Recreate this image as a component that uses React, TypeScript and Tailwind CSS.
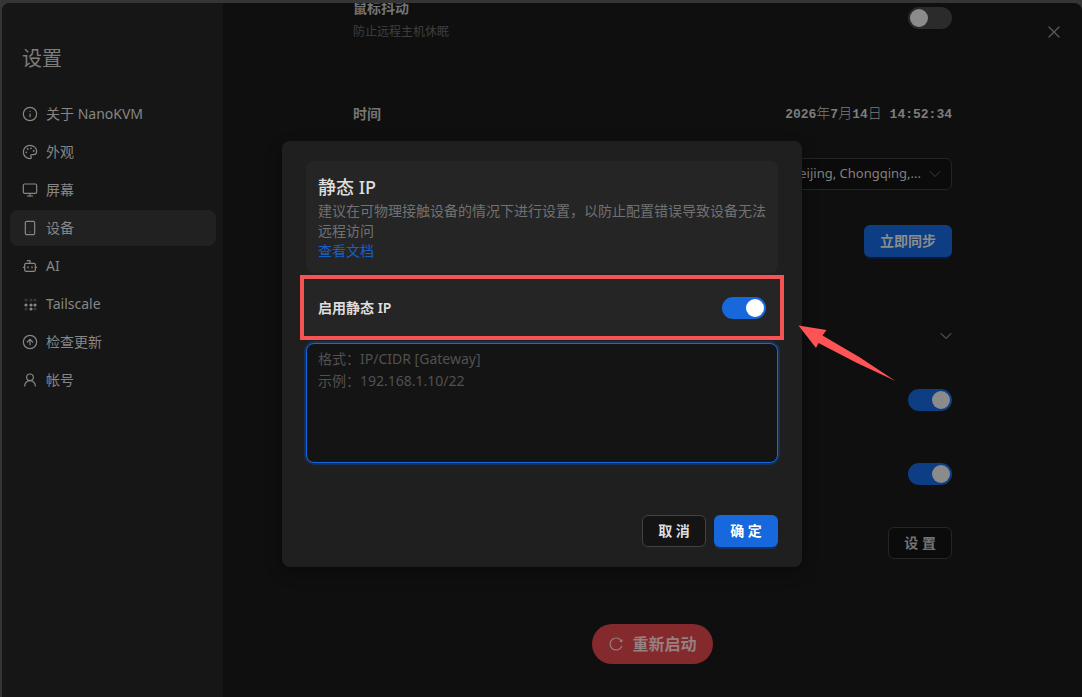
import React from "react";
import {
  Bot,
  ChevronDown,
  CircleArrowUp,
  Info,
  Monitor,
  Palette,
  Smartphone,
  UserRound,
  X,
} from "lucide-react";
import { AiOutlineReload } from "react-icons/ai";

function TailscaleIcon() {
  const dots: [number, number, boolean][] = [
    [4, 4, false],
    [9, 4, false],
    [13, 4, false],
    [4, 9, true],
    [9, 9, true],
    [13, 9, true],
    [4, 13, false],
    [9, 13, true],
    [13, 13, false],
  ];
  return (
    <svg viewBox="0 0 16 16" className="size-4" fill="currentColor" aria-hidden="true">
      {dots.map(([x, y, on]) => (
        <circle key={`${x}-${y}`} cx={x} cy={y} r="1.6" opacity={on ? 1 : 0.3} />
      ))}
    </svg>
  );
}

const navItems: { label: string; icon: React.ReactNode; active?: boolean }[] = [
  { label: "关于 NanoKVM", icon: <Info size={16} strokeWidth={1.8} /> },
  { label: "外观", icon: <Palette size={16} strokeWidth={1.8} /> },
  { label: "屏幕", icon: <Monitor size={16} strokeWidth={1.8} /> },
  { label: "设备", icon: <Smartphone size={16} strokeWidth={1.8} />, active: true },
  { label: "AI", icon: <Bot size={16} strokeWidth={1.8} /> },
  { label: "Tailscale", icon: <TailscaleIcon /> },
  { label: "检查更新", icon: <CircleArrowUp size={16} strokeWidth={1.8} /> },
  { label: "帐号", icon: <UserRound size={16} strokeWidth={1.8} /> },
];

function Toggle({
  label,
  id,
  defaultChecked = false,
  bright = false,
}: {
  label: string;
  id?: string;
  defaultChecked?: boolean;
  bright?: boolean;
}) {
  return (
    <input
      type="checkbox"
      role="switch"
      id={id}
      aria-label={label}
      defaultChecked={defaultChecked}
      className={
        "flex h-[22px] w-11 shrink-0 cursor-pointer appearance-none items-center rounded-full p-0.5 before:size-[18px] before:rounded-full before:content-[''] checked:justify-end " +
        (bright
          ? "bg-[#4a4a4a] before:bg-white checked:bg-[#1668dc]"
          : "bg-[#2b2b2b] before:bg-[#8b8b8b] checked:bg-[#0d3e84]")
      }
    />
  );
}

function Sidebar() {
  return (
    <aside className="w-[221px] shrink-0 bg-[#161616] pt-[38px] pr-[7px] pl-2">
      <h1 className="px-3 text-xl leading-9 text-[#7d7d7d]">设置</h1>
      <nav className="mt-[19px] flex flex-col gap-0.5">
        {navItems.map((item) => (
          <a
            key={item.label}
            href="#"
            aria-current={item.active ? "page" : undefined}
            className={
              "flex h-9 items-center gap-2 rounded-lg px-3 text-sm text-[#868686] " +
              (item.active ? "bg-[#212121]" : "")
            }
          >
            {item.icon}
            {item.label}
          </a>
        ))}
      </nav>
    </aside>
  );
}

function DeviceSettings() {
  return (
    <main className="min-w-0 flex-1 px-[130px]">
      <div className="flex items-start justify-between">
        <div className="-mt-[7px] flex flex-col">
          <span className="text-sm leading-6 font-semibold text-[#747474]">鼠标抖动</span>
          <span className="text-xs leading-6 text-[#3f3f3f]">防止远程主机休眠</span>
        </div>
        <div className="pt-1">
          <Toggle label="鼠标抖动" />
        </div>
      </div>

      <div className="mt-[58px] flex h-6 items-center justify-between text-[#7d7d7d]">
        <h2 className="text-sm font-semibold text-[#747474]">时间</h2>
        <time className="font-['Liberation_Mono','Noto_Sans_CJK_SC',monospace] text-[13px] font-bold whitespace-pre">
          2026<span className="text-sm font-light">年</span>7
          <span className="text-sm font-light">月</span>14
          <span className="text-sm font-light">日</span> 14:52:34
        </time>
      </div>

      <div className="mt-8 flex justify-end">
        <button
          type="button"
          className="flex h-8 w-60 items-center justify-end gap-1 rounded-md border border-[#252525] bg-[#0b0b0b] pr-1.5 text-[13px] whitespace-nowrap text-[#808080]"
        >
          (UTC+08:00) Beijing, Chongqing,...
          <ChevronDown size={20} strokeWidth={1} className="shrink-0 text-[#444444]" />
        </button>
      </div>

      <div className="mt-[35px] flex justify-end">
        <button
          type="button"
          className="h-8 rounded-md bg-[#0d3e84] px-4 text-sm font-semibold text-[#8c8c8c] shadow-[0_2px_0_#0b1a33]"
        >
          立即同步
        </button>
      </div>

      <div className="mt-[69px] -mr-1 flex justify-end">
        <button type="button" aria-label="展开" className="text-[#777777]">
          <ChevronDown size={20} strokeWidth={1.2} />
        </button>
      </div>

      <div className="mt-[43px] flex flex-col items-end gap-[52px]">
        <Toggle label="SSH" defaultChecked />
        <Toggle label="mDNS" defaultChecked />
      </div>

      <div className="mt-[42px] flex justify-end">
        <button
          type="button"
          className="h-8 rounded-md border border-[#262626] bg-[#0b0b0b] px-[15px] text-sm font-semibold text-[#747474]"
        >
          设 置
        </button>
      </div>

      <div className="mt-[65px] flex justify-center">
        <button
          type="button"
          className="flex h-10 items-center gap-2 rounded-full bg-[#84292c] px-4 text-base font-semibold text-[#968080]"
        >
          <AiOutlineReload size={16} />
          重新启动
        </button>
      </div>
    </main>
  );
}

function StaticIpDialog() {
  return (
    <div
      role="dialog"
      aria-modal="true"
      aria-labelledby="static-ip-title"
      className="w-[520px] rounded-lg bg-[#1f1f1f] px-6 py-5 shadow-[0_6px_16px_#00000055]"
    >
      <div className="rounded-lg bg-[#252525] p-3">
        <h2 id="static-ip-title" className="text-lg leading-7 font-medium text-[#dedede]">
          静态 IP
        </h2>
        <p className="text-sm leading-5 text-[#717171]">
          建议在可物理接触设备的情况下进行设置，以防止配置错误导致设备无法远程访问
        </p>
        <a href="#" className="block text-sm leading-5 text-[#1660c8]">
          查看文档
        </a>
      </div>

      <div className="-mx-1.5 mt-0.5 flex h-[65px] items-center justify-between border-4 border-[#f65354] bg-[#252525] px-3.5">
        <label htmlFor="static-ip-enabled" className="text-sm font-semibold text-[#dedede]">
          启用静态 IP
        </label>
        <Toggle id="static-ip-enabled" label="启用静态 IP" defaultChecked bright />
      </div>

      <textarea
        aria-label="静态 IP 地址"
        placeholder={"格式：IP/CIDR [Gateway]\n示例：192.168.1.10/22"}
        className="mt-[3px] block h-[120px] w-full resize-none rounded-lg border border-[#1668dc] bg-[#141414] px-[11px] py-1 text-sm leading-[22px] text-[#dedede] shadow-[0_0_0_2px_#173055] outline-none placeholder:text-[#515151]"
      />

      <div className="mt-[52px] flex justify-end gap-2">
        <button
          type="button"
          className="h-8 w-16 rounded-md border border-[#424242] bg-[#141414] text-sm font-semibold text-[#dedede]"
        >
          取 消
        </button>
        <button
          type="button"
          className="h-8 w-16 rounded-md bg-[#1668dc] text-sm font-semibold text-white shadow-[0_2px_0_#15325b]"
        >
          确 定
        </button>
      </div>
    </div>
  );
}

export default function App() {
  return (
    <div className="relative min-h-screen bg-[#353537] pt-[3px] pl-0.5 font-['Noto_Sans','Noto_Sans_CJK_SC',sans-serif]">
      <div className="flex min-h-[calc(100vh-3px)] overflow-hidden rounded-t-lg bg-[#0f0f0f]">
        <Sidebar />
        <DeviceSettings />
      </div>

      <button type="button" aria-label="关闭" className="absolute top-[22px] right-[18px] text-[#5c5c5c]">
        <X size={20} strokeWidth={1.5} />
      </button>

      <div className="absolute inset-x-0 top-[141px] flex justify-center pl-0.5">
        <div className="relative">
          <StaticIpDialog />
          <svg
            viewBox="0 0 98 60"
            className="absolute top-[184px] left-[516px] h-[60px] w-[98px]"
            fill="#ff5355"
            aria-hidden="true"
          >
            <path d="M0.5 0.5 L28.5 5 L24.5 10.5 L62 32.5 L97.5 56 L58 37.5 L20.5 18 L18 23 Z" />
          </svg>
        </div>
      </div>
    </div>
  );
}
